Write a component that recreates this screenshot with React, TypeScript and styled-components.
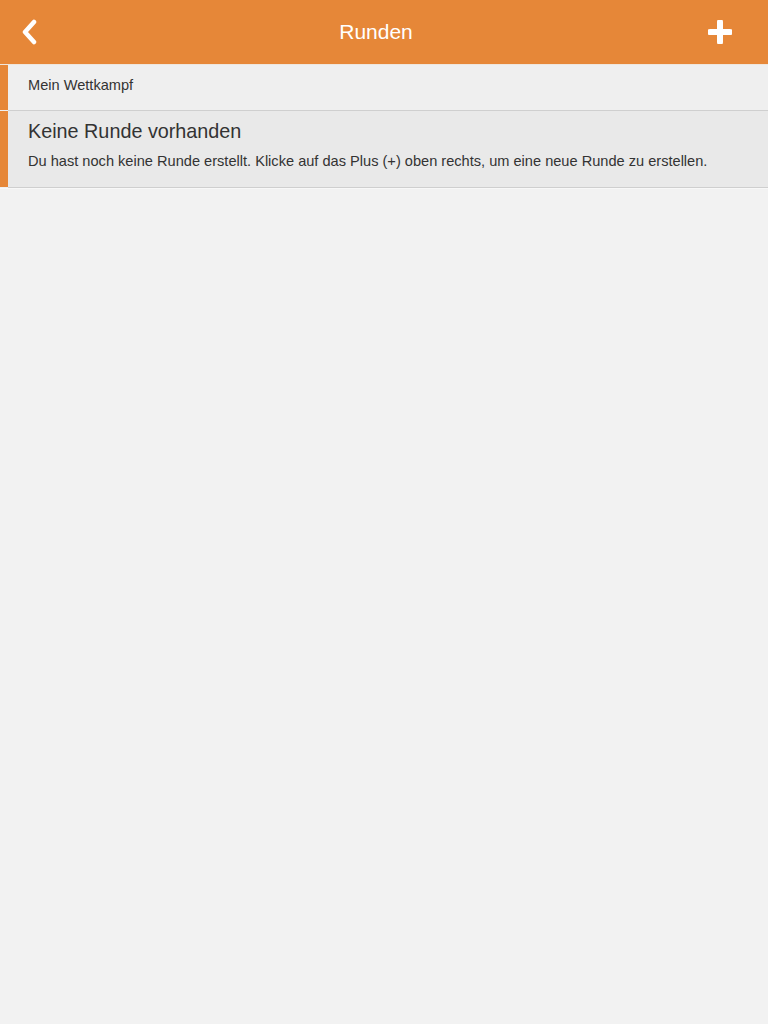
import React from "react";
import styled, { createGlobalStyle } from "styled-components";

const Global = createGlobalStyle`
  html, body { margin: 0; padding: 0; background: #f2f2f2; }
  body { font-family: "Liberation Sans", Arial, sans-serif; }
`;

const Page = styled.div`
  min-height: 1024px;
  background: #f2f2f2;
`;

const Header = styled.header`
  height: 64px;
  background: #e68738;
  display: grid;
  grid-template-columns: 60px 1fr 60px;
  align-items: center;
  border-bottom: 1px solid #efe6dc;
`;

const IconButton = styled.button<{ $align: "left" | "right" }>`
  background: none;
  border: 0;
  padding: 0;
  height: 64px;
  display: flex;
  align-items: center;
  justify-content: ${(p) => (p.$align === "left" ? "flex-start" : "flex-end")};
  padding-left: ${(p) => (p.$align === "left" ? "20px" : "0")};
  padding-right: ${(p) => (p.$align === "right" ? "36px" : "0")};
  cursor: pointer;
`;

const Title = styled.h1`
  margin: 0;
  color: #fff;
  font-size: 21px;
  font-weight: normal;
  text-align: center;
  padding-right: 16px;
  padding-top: 0;
`;

const Row = styled.div<{ $bg: string; $pad: string }>`
  background: ${(p) => p.$bg};
  border-left: 8px solid #e68738;
  padding: ${(p) => p.$pad};
  box-sizing: border-box;
  color: #333;
`;

const Separator = styled.div`
  height: 1px;
  background: #cfcfcf;
  border-left: 8px solid #f0f0f0;
`;

const SectionLabel = styled.div`
  font-size: 14.6px;
  height: 33px;
`;

const EmptyTitle = styled.div`
  font-size: 19.8px;
  line-height: 24px;
`;

const EmptyText = styled.div`
  font-size: 14.6px;
  line-height: 18px;
  margin-top: 9px;
  padding-bottom: 17px;
`;

const BottomEdge = styled.div`
  height: 1px;
  background: #f8f8f8;
`;

export default function App() {
  return (
    <Page>
      <Global />
      <Header>
        <IconButton $align="left" aria-label="Zurück">
          <svg width="18" height="26" viewBox="0 0 18 26">
            <path d="M14 3 L5 13 L14 23" fill="none" stroke="#fff" strokeWidth="4.5" strokeLinecap="round" strokeLinejoin="round" />
          </svg>
        </IconButton>
        <Title>Runden</Title>
        <IconButton $align="right" aria-label="Neue Runde">
          <svg width="24" height="24" viewBox="0 0 24 24">
            <path d="M12 2 V22 M2 12 H22" fill="none" stroke="#fff" strokeWidth="6" strokeLinecap="round" />
          </svg>
        </IconButton>
      </Header>
      <Row $bg="#efefef" $pad="12px 20px 0">
        <SectionLabel>Mein Wettkampf</SectionLabel>
      </Row>
      <Separator />
      <Row $bg="#e9e9e9" $pad="8px 20px 0">
        <EmptyTitle>Keine Runde vorhanden</EmptyTitle>
        <EmptyText>
          Du hast noch keine Runde erstellt. Klicke auf das Plus (+) oben rechts, um eine neue Runde zu erstellen.
        </EmptyText>
      </Row>
      <Separator />
      <BottomEdge />
    </Page>
  );
}
